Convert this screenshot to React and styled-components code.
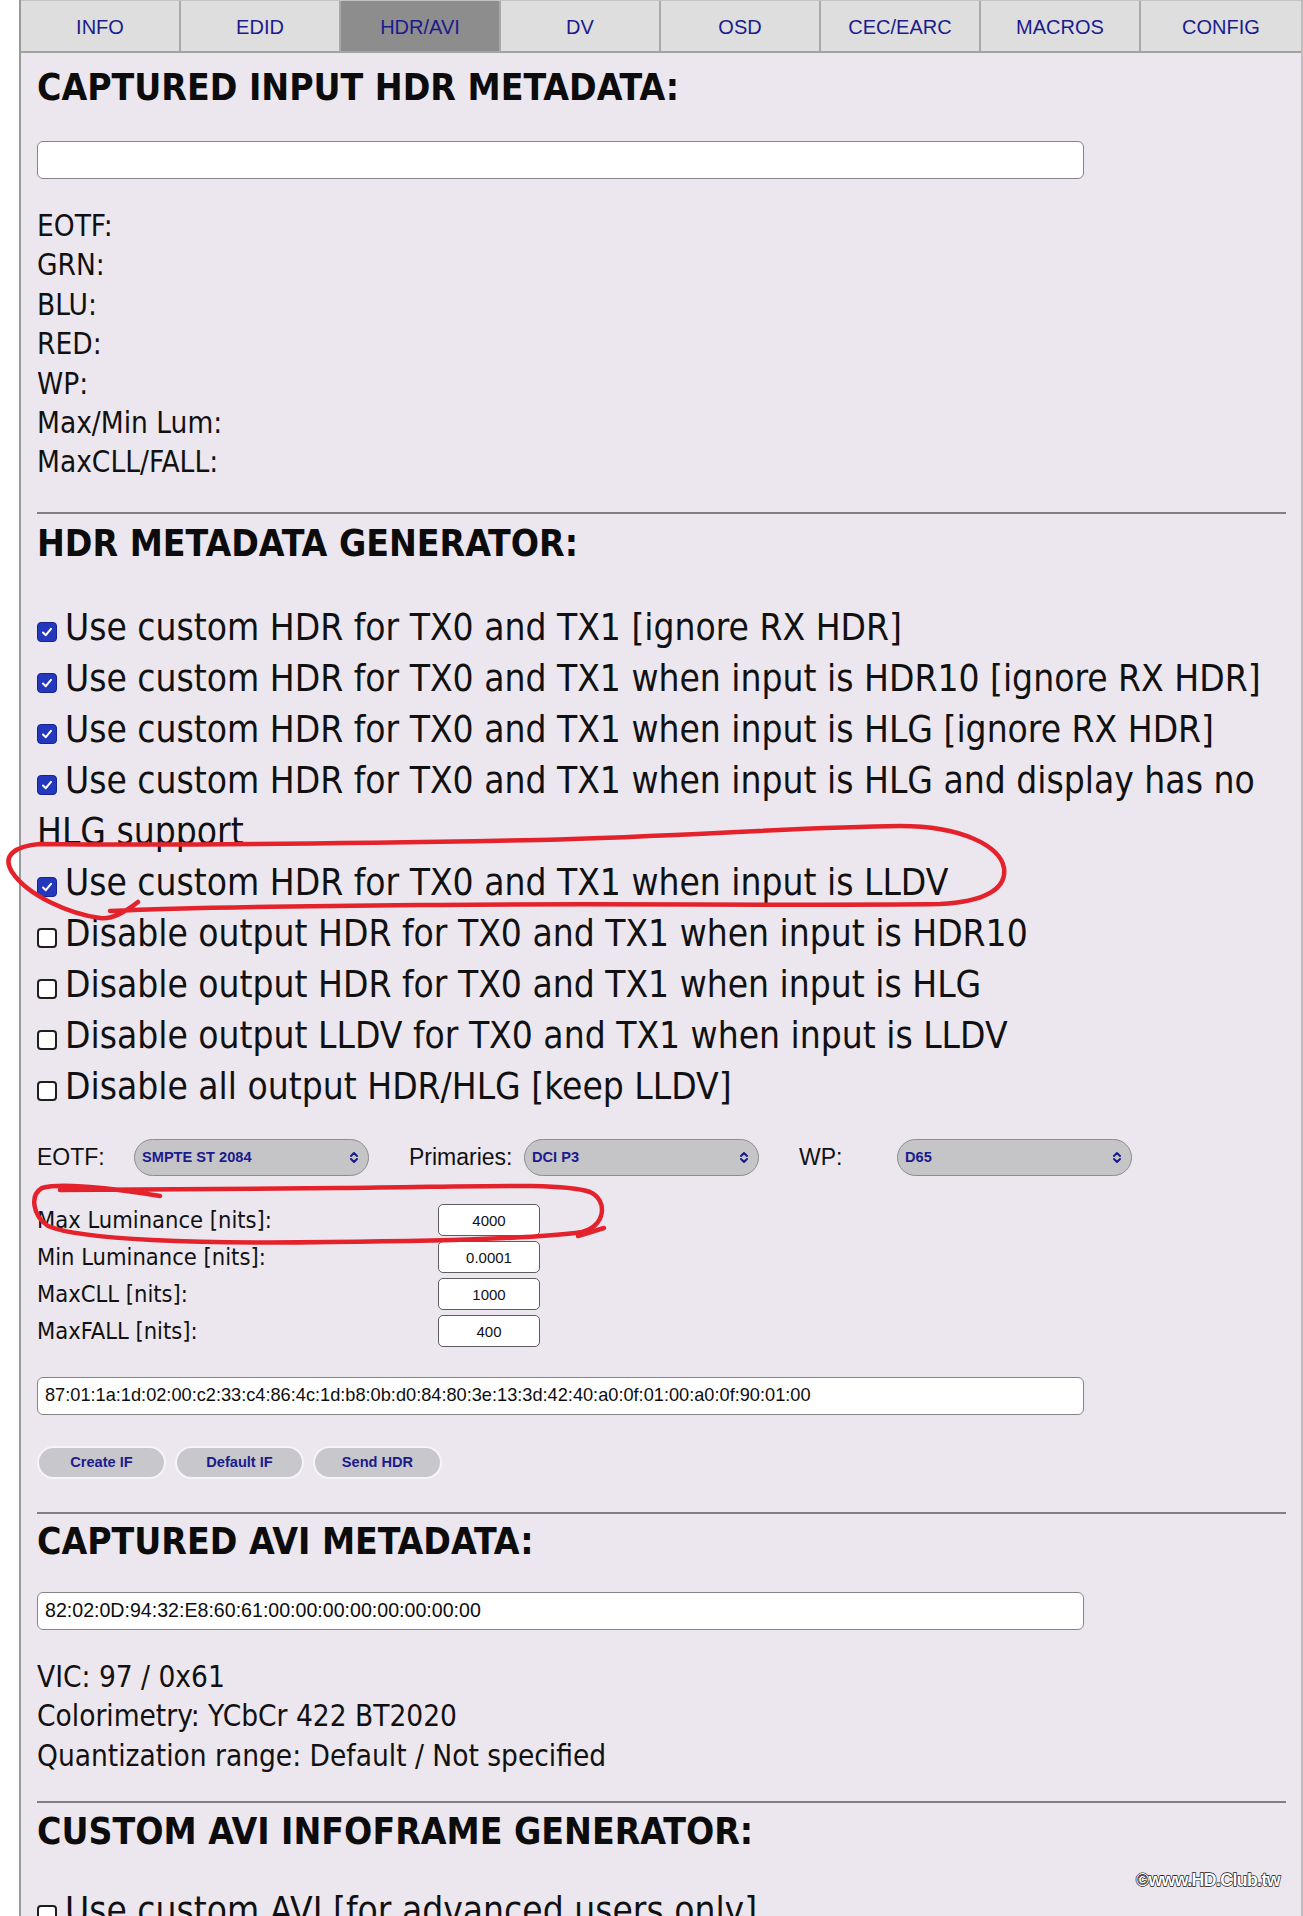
import React from 'react';
import styled, { createGlobalStyle } from 'styled-components';

const NAVY = '#1b1b8c';
const TAHOMA = `"DejaVu Sans Condensed", "DejaVu Sans", Verdana, sans-serif`;
const ARIAL = `"Liberation Sans", Arial, Helvetica, sans-serif`;

const GlobalStyle = createGlobalStyle`
  html, body { margin: 0; padding: 0; background: #ffffff; }
  body { font-family: ${TAHOMA}; color: #111; }
  * { box-sizing: border-box; }
`;

const Page = styled.div`
  position: relative;
  width: 1303px;
  height: 1916px;
  overflow: hidden;
`;

const Panel = styled.div`
  margin-left: 19px;
  width: 1284px;
  min-height: 1916px;
  background: #ece6ee;
  border-left: 2px solid #9a9a9a;
  border-right: 2px solid #bdbdbd;
`;

const Tabs = styled.nav`
  display: grid;
  grid-template-columns: repeat(8, 1fr);
  height: 53px;
  border-bottom: 2px solid #a2a2a2;
  border-top: 1px solid #c4c4c4;
`;

const Tab = styled.div`
  display: flex;
  align-items: center;
  justify-content: center;
  padding-top: 2px;
  background: ${p => (p.$active ? '#8d8d8d' : '#dedede')};
  border-right: 2px solid #a9a9a9;
  font: 20px ${ARIAL};
  color: ${NAVY};
  &:last-child { border-right: none; }
`;

const Content = styled.div`
  padding: 0 15px 0 16px;
`;

const Heading = styled.h2`
  margin: ${p => p.$mt}px 0 0;
  font: bold 37px/42px ${TAHOMA};
  color: #0c0c0c;
`;

const Rule = styled.hr`
  margin: ${p => p.$mt}px 0 0;
  border: none;
  height: 2px;
  background: #7f7f7f;
`;

const TextBox = styled.div`
  margin-top: ${p => p.$mt}px;
  width: 1047px;
  height: 38px;
  background: #fff;
  border: 1.5px solid #858585;
  border-radius: 6px;
  padding: 0 7px;
  display: flex;
  align-items: center;
  font-family: ${ARIAL};
  font-size: ${p => p.$size || 18}px;
  color: #0d0d0d;
  white-space: nowrap;
`;

const InfoList = styled.div`
  margin-top: ${p => p.$mt}px;
  font-size: 29.5px;
  line-height: 39.4px;
`;

const CheckList = styled.div`
  margin-top: ${p => p.$mt}px;
  font-size: 36.8px;
  line-height: 51px;
`;

const CheckLine = styled.div``;

const Box = styled.span`
  display: inline-block;
  width: 20px;
  height: 20px;
  margin-right: 8px;
  vertical-align: baseline;
  position: relative;
  top: 2px;
  border-radius: 4px;
  background: ${p => (p.$checked ? '#2338bd' : '#ffffff')};
  border: ${p => (p.$checked ? '1px solid #17238a' : '2px solid #1e1e1e')};
  svg { position: absolute; left: 1px; top: 1px; }
`;

const SelectRow = styled.div`
  margin-top: 27px;
  display: flex;
  align-items: center;
  height: 37px;
`;

const Field = styled.div`
  display: flex;
  align-items: center;
  margin-right: 40px;
`;

const FieldLabel = styled.span`
  width: ${p => p.$w}px;
  font: 23px ${ARIAL};
  color: #111;
`;

const Select = styled.div`
  width: 235px;
  height: 37px;
  border-radius: 19px;
  background: #c5c5c8;
  border: 1.5px solid #8d8d8d;
  display: flex;
  align-items: center;
  justify-content: space-between;
  padding: 0 9px 0 7px;
  font: 600 14.6px ${ARIAL};
  color: ${NAVY};
`;

const NumGrid = styled.div`
  margin-top: 26px;
  display: grid;
  grid-template-columns: 401px 102px;
  grid-auto-rows: 37px;
  align-items: center;
`;

const NumLabel = styled.span`
  font-size: 23.5px;
  color: #111;
`;

const NumInput = styled.div`
  height: 32px;
  background: #fff;
  border: 1.5px solid #5d5d5d;
  border-radius: 5px;
  display: flex;
  align-items: center;
  justify-content: center;
  font: 15px ${ARIAL};
  color: #111;
`;

const ButtonRow = styled.div`
  margin-top: 31px;
  display: flex;
  gap: 9px;
`;

const Button = styled.div`
  width: 129px;
  height: 33px;
  border-radius: 17px;
  background: #c8c8cc;
  border: 2px solid #f6f4f7;
  display: flex;
  align-items: center;
  justify-content: center;
  font: 600 14.6px ${ARIAL};
  color: ${NAVY};
`;

const Overlay = styled.svg`
  position: absolute;
  left: 0;
  top: 0;
  pointer-events: none;
`;

const Watermark = styled.div`
  position: absolute;
  left: 1136px;
  top: 1870px;
  font: bold 17.7px ${ARIAL};
  color: #ffffff;
  letter-spacing: -0.6px;
  -webkit-text-stroke: 1.3px #111;
  paint-order: stroke fill;
`;

const Check = ({ checked }) => (
  <Box $checked={checked}>
    {checked && (
      <svg width="16" height="16" viewBox="0 0 16 16">
        <path d="M4 8.5 L6.8 11.2 L12 4.8" fill="none" stroke="#fff" strokeWidth="2" strokeLinecap="round" strokeLinejoin="round" />
      </svg>
    )}
  </Box>
);

const Arrows = () => (
  <svg width="10" height="13" viewBox="0 0 10 13">
    <path d="M2 5 L5 2 L8 5 M2 8 L5 11 L8 8" fill="none" stroke={NAVY} strokeWidth="2" strokeLinecap="round" strokeLinejoin="round" />
  </svg>
);

const tabs = ['INFO', 'EDID', 'HDR/AVI', 'DV', 'OSD', 'CEC/EARC', 'MACROS', 'CONFIG'];
const meta = ['EOTF:', 'GRN:', 'BLU:', 'RED:', 'WP:', 'Max/Min Lum:', 'MaxCLL/FALL:'];
const checks = [
  [true, 'Use custom HDR for TX0 and TX1 [ignore RX HDR]'],
  [true, 'Use custom HDR for TX0 and TX1 when input is HDR10 [ignore RX HDR]'],
  [true, 'Use custom HDR for TX0 and TX1 when input is HLG [ignore RX HDR]'],
  [true, 'Use custom HDR for TX0 and TX1 when input is HLG and display has no HLG support'],
  [true, 'Use custom HDR for TX0 and TX1 when input is LLDV'],
  [false, 'Disable output HDR for TX0 and TX1 when input is HDR10'],
  [false, 'Disable output HDR for TX0 and TX1 when input is HLG'],
  [false, 'Disable output LLDV for TX0 and TX1 when input is LLDV'],
  [false, 'Disable all output HDR/HLG [keep LLDV]'],
];
const nums = [
  ['Max Luminance [nits]:', '4000'],
  ['Min Luminance [nits]:', '0.0001'],
  ['MaxCLL [nits]:', '1000'],
  ['MaxFALL [nits]:', '400'],
];

export default function App() {
  return (
    <Page>
      <GlobalStyle />
      <Panel>
        <Tabs>
          {tabs.map(t => (
            <Tab key={t} $active={t === 'HDR/AVI'}>{t}</Tab>
          ))}
        </Tabs>
        <Content>
          <Heading $mt={14}>CAPTURED INPUT HDR METADATA:</Heading>
          <TextBox $mt={32} />
          <InfoList $mt={28}>
            {meta.map(m => <div key={m}>{m}</div>)}
          </InfoList>
          <Rule $mt={29} />
          <Heading $mt={9}>HDR METADATA GENERATOR:</Heading>
          <CheckList $mt={37}>
            {checks.map(([c, t]) => (
              <CheckLine key={t}><Check checked={c} />{t}</CheckLine>
            ))}
          </CheckList>
          <SelectRow>
            <Field>
              <FieldLabel $w={97}>EOTF:</FieldLabel>
              <Select>SMPTE ST 2084<Arrows /></Select>
            </Field>
            <Field>
              <FieldLabel $w={115}>Primaries:</FieldLabel>
              <Select>DCI P3<Arrows /></Select>
            </Field>
            <Field>
              <FieldLabel $w={98}>WP:</FieldLabel>
              <Select>D65<Arrows /></Select>
            </Field>
          </SelectRow>
          <NumGrid>
            {nums.map(([l, v]) => (
              <React.Fragment key={l}>
                <NumLabel>{l}</NumLabel>
                <NumInput>{v}</NumInput>
              </React.Fragment>
            ))}
          </NumGrid>
          <TextBox $mt={27} $size={18.2}>87:01:1a:1d:02:00:c2:33:c4:86:4c:1d:b8:0b:d0:84:80:3e:13:3d:42:40:a0:0f:01:00:a0:0f:90:01:00</TextBox>
          <ButtonRow>
            <Button>Create IF</Button>
            <Button>Default IF</Button>
            <Button>Send HDR</Button>
          </ButtonRow>
          <Rule $mt={33} />
          <Heading $mt={7}>CAPTURED AVI METADATA:</Heading>
          <TextBox $mt={29} $size={19.6}>82:02:0D:94:32:E8:60:61:00:00:00:00:00:00:00:00</TextBox>
          <InfoList $mt={28}>
            <div>VIC: 97 / 0x61</div>
            <div>Colorimetry: YCbCr 422 BT2020</div>
            <div>Quantization range: Default / Not specified</div>
          </InfoList>
          <Rule $mt={25} />
          <Heading $mt={8}>CUSTOM AVI INFOFRAME GENERATOR:</Heading>
          <CheckList $mt={32}>
            <CheckLine><Check checked={false} />Use custom AVI [for advanced users only]</CheckLine>
          </CheckList>
        </Content>
      </Panel>
      <Overlay width="1303" height="1916" viewBox="0 0 1303 1916">
        <g fill="none" stroke="#e3222b" strokeWidth="4.5" strokeLinecap="round" strokeLinejoin="round">
          <path d="M 138 902 C 125 912, 112 920, 100 918 C 70 914, 28 896, 12 872 C 2 856, 14 846, 40 844 C 180 846, 380 843, 540 840 C 690 836, 800 827, 900 826 C 962 826, 1000 846, 1004 868 C 1007 890, 982 902, 940 904 C 800 906, 600 903, 420 905 C 300 906, 200 907, 110 911" />
          <path d="M 160 1196 C 110 1188, 60 1183, 42 1188 C 30 1195, 32 1215, 48 1226 C 80 1240, 200 1244, 330 1242 C 460 1241, 540 1238, 582 1232 C 606 1226, 608 1200, 590 1192 C 560 1182, 470 1187, 340 1188 C 240 1189, 130 1190, 60 1190" />
          <path d="M 578 1236 L 604 1228" />
        </g>
      </Overlay>
      <Watermark>©www.HD.Club.tw</Watermark>
    </Page>
  );
}
